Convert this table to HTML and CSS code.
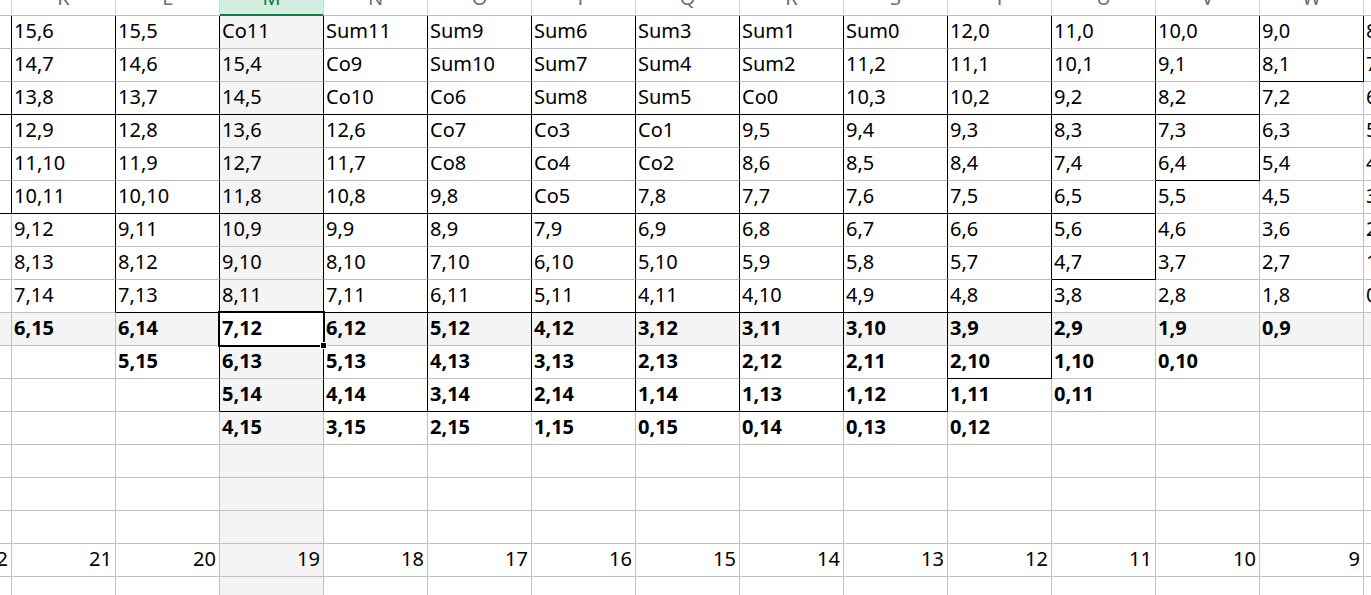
FILE: index.html
```html
<!DOCTYPE html>
<html lang="en">
<head>
<meta charset="utf-8">
<title>Sheet</title>
<link rel="stylesheet" href="styles.css">
</head>
<body>
<div class="sheet">
  <div class="row hdr">
    <div class="c"></div><div class="c"><span>K</span></div><div class="c"><span>L</span></div><div class="c sel-col"><span>M</span></div><div class="c"><span>N</span></div><div class="c"><span>O</span></div><div class="c"><span>P</span></div><div class="c"><span>Q</span></div><div class="c"><span>R</span></div><div class="c"><span>S</span></div><div class="c"><span>T</span></div><div class="c"><span>U</span></div><div class="c"><span>V</span></div><div class="c"><span>W</span></div><div class="c"><span>X</span></div>
  </div>
  <div class="row">
    <div class="c r"></div><div class="c r">15,6</div><div class="c r">15,5</div><div class="c r">Co11</div><div class="c r">Sum11</div><div class="c r">Sum9</div><div class="c r">Sum6</div><div class="c r">Sum3</div><div class="c r">Sum1</div><div class="c r">Sum0</div><div class="c r">12,0</div><div class="c r">11,0</div><div class="c r">10,0</div><div class="c r">9,0</div><div class="c">8,0</div>
  </div>
  <div class="row">
    <div class="c r"></div><div class="c r">14,7</div><div class="c r">14,6</div><div class="c r">15,4</div><div class="c r">Co9</div><div class="c r">Sum10</div><div class="c r">Sum7</div><div class="c r">Sum4</div><div class="c r">Sum2</div><div class="c r">11,2</div><div class="c r">11,1</div><div class="c r">10,1</div><div class="c r">9,1</div><div class="c r b">8,1</div><div class="c">7,1</div>
  </div>
  <div class="row">
    <div class="c r b"></div><div class="c r b">13,8</div><div class="c r b">13,7</div><div class="c r b">14,5</div><div class="c r b">Co10</div><div class="c r b">Co6</div><div class="c r b">Sum8</div><div class="c r b">Sum5</div><div class="c r b">Co0</div><div class="c r b">10,3</div><div class="c r b">10,2</div><div class="c r b">9,2</div><div class="c r b">8,2</div><div class="c">7,2</div><div class="c">6,2</div>
  </div>
  <div class="row">
    <div class="c r"></div><div class="c r">12,9</div><div class="c r">12,8</div><div class="c r">13,6</div><div class="c r">12,6</div><div class="c r">Co7</div><div class="c r">Co3</div><div class="c r">Co1</div><div class="c r">9,5</div><div class="c r">9,4</div><div class="c r">9,3</div><div class="c r">8,3</div><div class="c r">7,3</div><div class="c">6,3</div><div class="c">5,3</div>
  </div>
  <div class="row">
    <div class="c r"></div><div class="c r">11,10</div><div class="c r">11,9</div><div class="c r">12,7</div><div class="c r">11,7</div><div class="c r">Co8</div><div class="c r">Co4</div><div class="c r">Co2</div><div class="c r">8,6</div><div class="c r">8,5</div><div class="c r">8,4</div><div class="c r">7,4</div><div class="c r b">6,4</div><div class="c">5,4</div><div class="c">4,4</div>
  </div>
  <div class="row">
    <div class="c r b"></div><div class="c r b">10,11</div><div class="c r b">10,10</div><div class="c r b">11,8</div><div class="c r b">10,8</div><div class="c r b">9,8</div><div class="c r b">Co5</div><div class="c r b">7,8</div><div class="c r b">7,7</div><div class="c r b">7,6</div><div class="c r b">7,5</div><div class="c r b">6,5</div><div class="c">5,5</div><div class="c">4,5</div><div class="c">3,5</div>
  </div>
  <div class="row">
    <div class="c"></div><div class="c r">9,12</div><div class="c r">9,11</div><div class="c r">10,9</div><div class="c r">9,9</div><div class="c r">8,9</div><div class="c r">7,9</div><div class="c r">6,9</div><div class="c r">6,8</div><div class="c r">6,7</div><div class="c r">6,6</div><div class="c r">5,6</div><div class="c">4,6</div><div class="c">3,6</div><div class="c">2,6</div>
  </div>
  <div class="row">
    <div class="c"></div><div class="c r">8,13</div><div class="c r">8,12</div><div class="c r">9,10</div><div class="c r">8,10</div><div class="c r">7,10</div><div class="c r">6,10</div><div class="c r">5,10</div><div class="c r">5,9</div><div class="c r">5,8</div><div class="c r">5,7</div><div class="c r b">4,7</div><div class="c">3,7</div><div class="c">2,7</div><div class="c">1,7</div>
  </div>
  <div class="row">
    <div class="c"></div><div class="c r">7,14</div><div class="c r b">7,13</div><div class="c r b">8,11</div><div class="c r b">7,11</div><div class="c r b">6,11</div><div class="c r b">5,11</div><div class="c r b">4,11</div><div class="c r b">4,10</div><div class="c r b">4,9</div><div class="c r b">4,8</div><div class="c">3,8</div><div class="c">2,8</div><div class="c">1,8</div><div class="c">0,8</div>
  </div>
  <div class="row focus bold">
    <div class="c"></div><div class="c">6,15</div><div class="c r">6,14</div><div class="c r sel">7,12</div><div class="c r">6,12</div><div class="c r">5,12</div><div class="c r">4,12</div><div class="c r">3,12</div><div class="c r">3,11</div><div class="c r">3,10</div><div class="c r">3,9</div><div class="c">2,9</div><div class="c">1,9</div><div class="c">0,9</div><div class="c"></div>
  </div>
  <div class="row bold">
    <div class="c"></div><div class="c"></div><div class="c r">5,15</div><div class="c r">6,13</div><div class="c r">5,13</div><div class="c r">4,13</div><div class="c r">3,13</div><div class="c r">2,13</div><div class="c r">2,12</div><div class="c r">2,11</div><div class="c r b">2,10</div><div class="c">1,10</div><div class="c">0,10</div><div class="c"></div><div class="c"></div>
  </div>
  <div class="row bold">
    <div class="c"></div><div class="c"></div><div class="c r"></div><div class="c r b">5,14</div><div class="c r b">4,14</div><div class="c r b">3,14</div><div class="c r b">2,14</div><div class="c r b">1,14</div><div class="c r b">1,13</div><div class="c r b">1,12</div><div class="c">1,11</div><div class="c">0,11</div><div class="c"></div><div class="c"></div><div class="c"></div>
  </div>
  <div class="row bold">
    <div class="c"></div><div class="c"></div><div class="c"></div><div class="c">4,15</div><div class="c">3,15</div><div class="c">2,15</div><div class="c">1,15</div><div class="c">0,15</div><div class="c">0,14</div><div class="c">0,13</div><div class="c">0,12</div><div class="c"></div><div class="c"></div><div class="c"></div><div class="c"></div>
  </div>
  <div class="row">
    <div class="c"></div><div class="c"></div><div class="c"></div><div class="c"></div><div class="c"></div><div class="c"></div><div class="c"></div><div class="c"></div><div class="c"></div><div class="c"></div><div class="c"></div><div class="c"></div><div class="c"></div><div class="c"></div><div class="c"></div>
  </div>
  <div class="row">
    <div class="c"></div><div class="c"></div><div class="c"></div><div class="c"></div><div class="c"></div><div class="c"></div><div class="c"></div><div class="c"></div><div class="c"></div><div class="c"></div><div class="c"></div><div class="c"></div><div class="c"></div><div class="c"></div><div class="c"></div>
  </div>
  <div class="row">
    <div class="c"></div><div class="c"></div><div class="c"></div><div class="c"></div><div class="c"></div><div class="c"></div><div class="c"></div><div class="c"></div><div class="c"></div><div class="c"></div><div class="c"></div><div class="c"></div><div class="c"></div><div class="c"></div><div class="c"></div>
  </div>
  <div class="row num">
    <div class="c">22</div><div class="c">21</div><div class="c">20</div><div class="c">19</div><div class="c">18</div><div class="c">17</div><div class="c">16</div><div class="c">15</div><div class="c">14</div><div class="c">13</div><div class="c">12</div><div class="c">11</div><div class="c">10</div><div class="c">9</div><div class="c">8</div>
  </div>
  <div class="row">
    <div class="c"></div><div class="c"></div><div class="c"></div><div class="c"></div><div class="c"></div><div class="c"></div><div class="c"></div><div class="c"></div><div class="c"></div><div class="c"></div><div class="c"></div><div class="c"></div><div class="c"></div><div class="c"></div><div class="c"></div>
  </div>
</div>
</body>
</html>
```
FILE: styles.css
```css
html, body {
  margin: 0;
  padding: 0;
  background: #ffffff;
}
body {
  width: 1371px;
  height: 595px;
  overflow: hidden;
  font-family: "Noto Sans", "Open Sans", sans-serif;
  font-size: 20px;
  color: #000;
}
.sheet {
  width: 1371px;
  overflow: hidden;
}
.row {
  display: grid;
  grid-template-columns: 12px repeat(13, 104px) 104px;
  height: 33px;
}
.c {
  box-sizing: border-box;
  height: 33px;
  border-right: 1px solid #c0c0c0;
  border-bottom: 1px solid #c0c0c0;
  display: flex;
  align-items: flex-end;
  justify-content: flex-start;
  padding: 0 0 5px 2px;
  line-height: 24px;
  white-space: nowrap;
  overflow: hidden;
  background: #ffffff;
}
.row > .c:nth-child(4) {
  background: #f4f4f4;
}
.row.focus > .c {
  background: #f4f4f4;
}
.c.r {
  border-right-color: #000;
}
.c.b {
  border-bottom-color: #000;
}
.bold .c {
  font-weight: 700;
}
.num .c {
  justify-content: flex-end;
  padding: 0 3px 5px 0;
}

/* header */
.row.hdr {
  height: 16px;
}
.hdr .c {
  height: 16px;
  padding: 0 0 5px 0;
  justify-content: center;
  border-right-color: #d4d4d4;
  border-bottom-color: #bdbdbd;
  color: #6f6f6f;
  background: #ffffff;
}
.hdr .c span {
  display: block;
  line-height: 24px;
}
.row.hdr > .c.sel-col {
  background: #d3efe0;
  color: #107c41;
  border-bottom-color: #107c41;
  box-shadow: inset 0 -1px 0 #107c41;
}

/* selected cell */
.row > .c.sel {
  position: relative;
  overflow: visible;
  background: #ffffff;
}
.c.sel::after {
  content: "";
  position: absolute;
  left: -2px;
  top: -2px;
  right: -2px;
  bottom: -2px;
  border: 2px solid #000;
  pointer-events: none;
}
.c.sel::before {
  content: "";
  position: absolute;
  right: -4px;
  bottom: -4px;
  width: 5px;
  height: 5px;
  background: #000;
  border: 1px solid #fff;
  z-index: 2;
}
```
